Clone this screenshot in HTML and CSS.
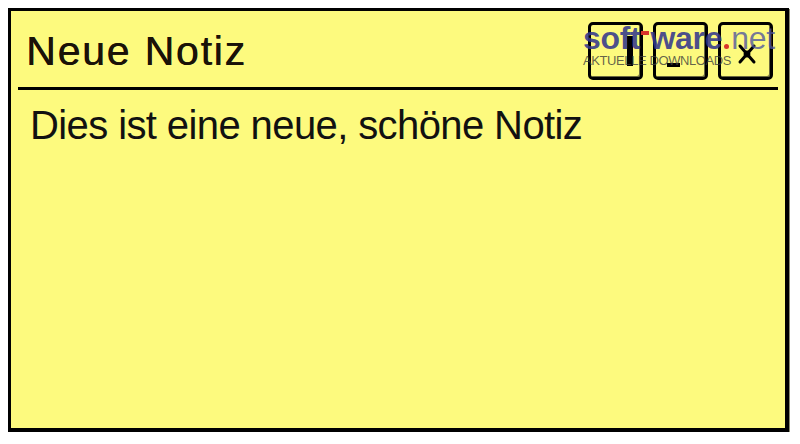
FILE: index.html
```html
<!DOCTYPE html>
<html lang="de">
<head>
    <meta charset="UTF-8">
    <meta name="viewport" content="width=device-width, initial-scale=1.0">
    <title>Neue Notiz</title>
    <link rel="stylesheet" href="styles.css">
</head>
<body>
    <div class="note">
        <div class="note-head">
            <h1 class="note-title">Neue Notiz</h1>
            <div class="note-buttons">
                <button class="note-btn btn-pin" title="Anheften"><span class="icon-pin"></span></button>
                <button class="note-btn btn-min" title="Minimieren"><span class="icon-min"></span></button>
                <button class="note-btn btn-close" title="Schließen">
                    <svg width="20" height="22" viewBox="0 0 20 22">
                        <path d="M3 3 L17 19 M17 3 L3 19" stroke="#000" stroke-width="3" stroke-linecap="round"/>
                        <circle cx="10" cy="11" r="3.4" fill="#000"/>
                    </svg>
                </button>
            </div>
        </div>

        <p class="note-text">Dies ist eine neue, schöne Notiz</p>

        <div class="watermark">
            <div class="wm-logo"><span class="wm-bold">soft</span><span class="wm-dash"></span><span class="wm-bold">ware</span><span class="wm-dot"></span><span class="wm-net">net</span></div>
            <div class="wm-sub">AKTUELLE DOWNLOADS</div>
        </div>
    </div>
</body>
</html>
```

FILE: styles.css
```css
* {
    margin: 0;
    padding: 0;
    box-sizing: border-box;
}

body {
    margin: 8px;
    background: #fff;
    font-family: "Liberation Sans", Arial, sans-serif;
    color: #000;
}

.note {
    position: relative;
    width: 781px;
    height: 424px;
    background: #fdfa7e;
    border: solid #000;
    border-width: 3px 4px 4px 3px;
    box-shadow: 1px 1px 0 #8a8a70;
}

.note-head {
    display: flex;
    align-items: center;
    justify-content: space-between;
    margin: 0 7px;
    padding: 11px 5px 7px 8px;
    border-bottom: 3px solid #000;
}

.note-title {
    font-size: 41px;
    font-weight: normal;
    line-height: 40px;
    letter-spacing: 1.8px;
    color: #1a1208;
    text-shadow: 0.5px 0 0 #1a1208;
}

.note-buttons {
    display: flex;
    gap: 10px;
}

.note-btn {
    width: 55px;
    height: 58px;
    display: flex;
    background: #fdfa7e;
    border: 3px solid #000;
    border-radius: 5px;
    box-shadow: inset -1px -1px 0 #6b6940;
    cursor: pointer;
}

.btn-pin {
    justify-content: flex-end;
    align-items: center;
    padding-right: 7px;
}

.icon-pin {
    width: 6px;
    height: 30px;
    background: #000;
}

.btn-min {
    justify-content: flex-start;
    align-items: flex-end;
    padding: 0 0 10px 11px;
}

.icon-min {
    width: 13px;
    height: 4px;
    background: #000;
}

.btn-close {
    justify-content: center;
    align-items: center;
    padding: 6px 0 0 3px;
}

.note-text {
    padding: 15px 16px 0 19px;
    font-size: 40px;
    line-height: 40px;
    letter-spacing: -0.6px;
    color: #111;
}

.watermark {
    position: absolute;
    left: 572px;
    top: 11px;
    pointer-events: none;
}

.wm-logo {
    display: flex;
    align-items: baseline;
    font-size: 32px;
    line-height: 33px;
    letter-spacing: -0.3px;
    color: rgba(52, 56, 140, 0.88);
}

.wm-bold {
    font-weight: bold;
}

.wm-dash {
    width: 8px;
    height: 4px;
    margin: 9px 1px 0;
    background: #d8342a;
    align-self: flex-start;
}

.wm-dot {
    width: 5px;
    height: 5px;
    margin: 0 2px;
    border-radius: 50%;
    background: #d8342a;
}

.wm-net {
    color: rgba(80, 86, 158, 0.8);
}

.wm-sub {
    margin-top: -1px;
    font-size: 13px;
    line-height: 14px;
    letter-spacing: -0.4px;
    color: rgba(60, 60, 60, 0.8);
}
```
